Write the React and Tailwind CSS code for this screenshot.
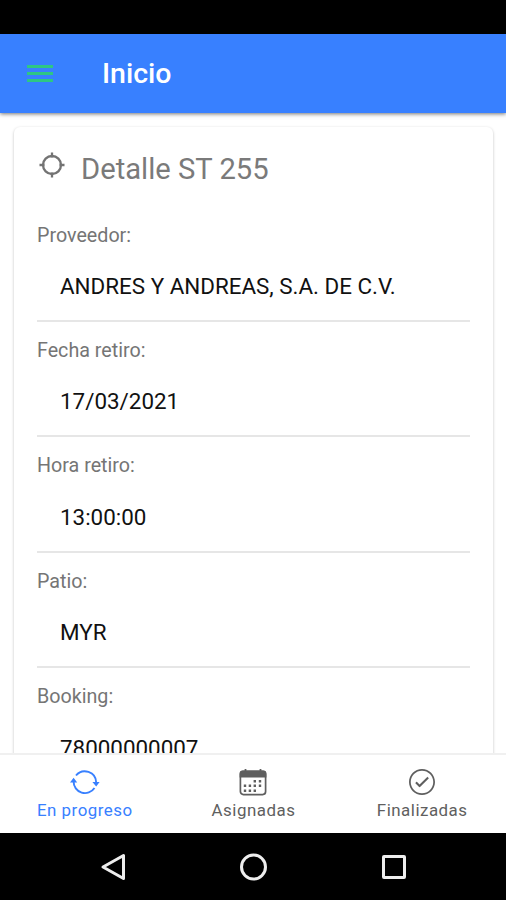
import React, { useState } from 'react';
import { IoIosCheckmarkCircleOutline } from 'react-icons/io';

const fields = [
  { label: 'Proveedor:', value: 'ANDRES Y ANDREAS, S.A. DE C.V.' },
  { label: 'Fecha retiro:', value: '17/03/2021' },
  { label: 'Hora retiro:', value: '13:00:00' },
  { label: 'Patio:', value: 'MYR' },
  { label: 'Booking:', value: '78000000007' },
];

const SyncIcon = () => (
  <svg width="32" height="32" viewBox="0 0 32 32" fill="none" stroke="currentColor" strokeWidth="1.9">
    <path d="M7 9.5A11.4 11.4 0 0 1 27.2 16.5" />
    <path d="M4.6 15.5A11.4 11.4 0 0 0 25.5 22" />
    <path d="M23.4 16h7.2l-3.4 4.6zM1 16.4h7.2L4.6 11.8z" fill="currentColor" stroke="none" />
  </svg>
);

const CalendarIcon = () => (
  <svg width="32" height="32" viewBox="0 0 32 32" fill="currentColor">
    <rect x="3.4" y="5.4" width="25.2" height="23.2" rx="3" fill="none" stroke="currentColor" strokeWidth="1.7" />
    <path d="M2.6 11.5V7.6a3 3 0 0 1 3-3h20.8a3 3 0 0 1 3 3v3.9z" />
    <path d="M7.6 3h1.8v3H7.6zM22.6 3h1.8v3h-1.8z" />
    <path d="M16.6 14h2.4v2.4h-2.4zM21.8 14h2.4v2.4h-2.4z" />
    <path d="M6.8 18.5h2.4v2.4H6.8zM11.7 18.5h2.4v2.4h-2.4zM16.6 18.5h2.4v2.4h-2.4zM21.8 18.5h2.4v2.4h-2.4z" />
    <path d="M6.8 23.5h2.4v2.4H6.8zM11.7 23.5h2.4v2.4h-2.4zM16.6 23.5h2.4v2.4h-2.4z" />
  </svg>
);

const CheckIcon = () => <IoIosCheckmarkCircleOutline size={32} />;

const tabs = [
  { name: 'En progreso', icon: SyncIcon },
  { name: 'Asignadas', icon: CalendarIcon },
  { name: 'Finalizadas', icon: CheckIcon },
];

const LocateIcon = () => (
  <svg width="26" height="26" viewBox="0 0 26 26" fill="none" stroke="#737373" strokeWidth="2.3">
    <circle cx="13" cy="13" r="9" />
    <path d="M13 .5v5M13 20.5v5M.5 13h5M20.5 13h5" />
  </svg>
);

const Header = () => (
  <header className="relative z-10 flex h-[79px] shrink-0 items-center bg-[#3880ff] pl-[27px] shadow-[0_1px_4px_rgba(0,0,0,0.55)]">
    <button aria-label="Menu" className="flex w-[26px] flex-col gap-1">
      <span className="h-[3px] bg-[#2dd36f]/85" />
      <span className="h-[3px] bg-[#2dd36f]/85" />
      <span className="h-[3px] bg-[#2dd36f]/85" />
    </button>
    <h1 className="ml-[49px] pt-px text-[28.5px] leading-8 font-medium text-white">Inicio</h1>
  </header>
);

const Field = ({ label, value }) => (
  <div className="h-[115.4px] shrink-0 border-b-2 border-[#e6e6e6] pt-[17px]">
    <div className="text-[19.7px] leading-6 text-[#757575]">{label}</div>
    <div className="mt-[24.6px] pl-[23px] text-[22.4px] leading-7 text-[#111]">{value}</div>
  </div>
);

const App = () => {
  const [active, setActive] = useState('En progreso');

  return (
    <div className="flex h-[900px] w-[506px] flex-col overflow-hidden bg-white font-['Roboto',sans-serif]">
      <div className="h-[34px] shrink-0 bg-black" />
      <Header />

      {/* Detail card */}
      <main className="min-h-0 flex-1 overflow-hidden pt-[14px] pr-[13px] pl-[14px]">
        <section className="h-[760px] rounded-md bg-white px-[23px] shadow-[0_1px_3px_rgba(0,0,0,0.25)]">
          <div className="flex h-[79.5px] items-center pt-1">
            <span className="mb-[8px] ml-[2px]"><LocateIcon /></span>
            <h2 className="ml-4 text-[29.2px] leading-9 text-[#7a7a7a]">Detalle ST 255</h2>
          </div>
          {fields.map((field) => (
            <Field key={field.label} {...field} />
          ))}
        </section>
      </main>

      {/* Tabs */}
      <nav className="z-10 grid h-20 shrink-0 grid-cols-3 border-t-2 border-[#f0f0f0] bg-white">
        {tabs.map((tab) => {
          const Icon = tab.icon;
          return (
            <button
              key={tab.name}
              onClick={() => setActive(tab.name)}
              className={`flex flex-col items-center pt-[11px] pl-px ${active === tab.name ? 'text-[#3880ff]' : 'text-[#5f5f5f]'}`}
            >
              <Icon />
              <span className="mt-0.5 text-[16.9px] leading-5 tracking-[0.5px]">{tab.name}</span>
            </button>
          );
        })}
      </nav>

      {/* Android navigation bar */}
      <div className="grid h-[67px] shrink-0 grid-cols-[1fr_28px_1fr] items-center bg-black">
        <svg className="mr-[113px] justify-self-end" width="26" height="28" viewBox="0 0 26 28" fill="none" stroke="#eee" strokeWidth="3" strokeLinejoin="round">
          <path d="M23.5 2.5v23L3 14z" />
        </svg>
        <svg width="28" height="28" viewBox="0 0 28 28" fill="none" stroke="#eee" strokeWidth="3">
          <circle cx="14.5" cy="14" r="12" />
        </svg>
        <span className="ml-[115px] h-6 w-6 rounded-xs border-3 border-[#eee]" />
      </div>
    </div>
  );
};

export default App;
